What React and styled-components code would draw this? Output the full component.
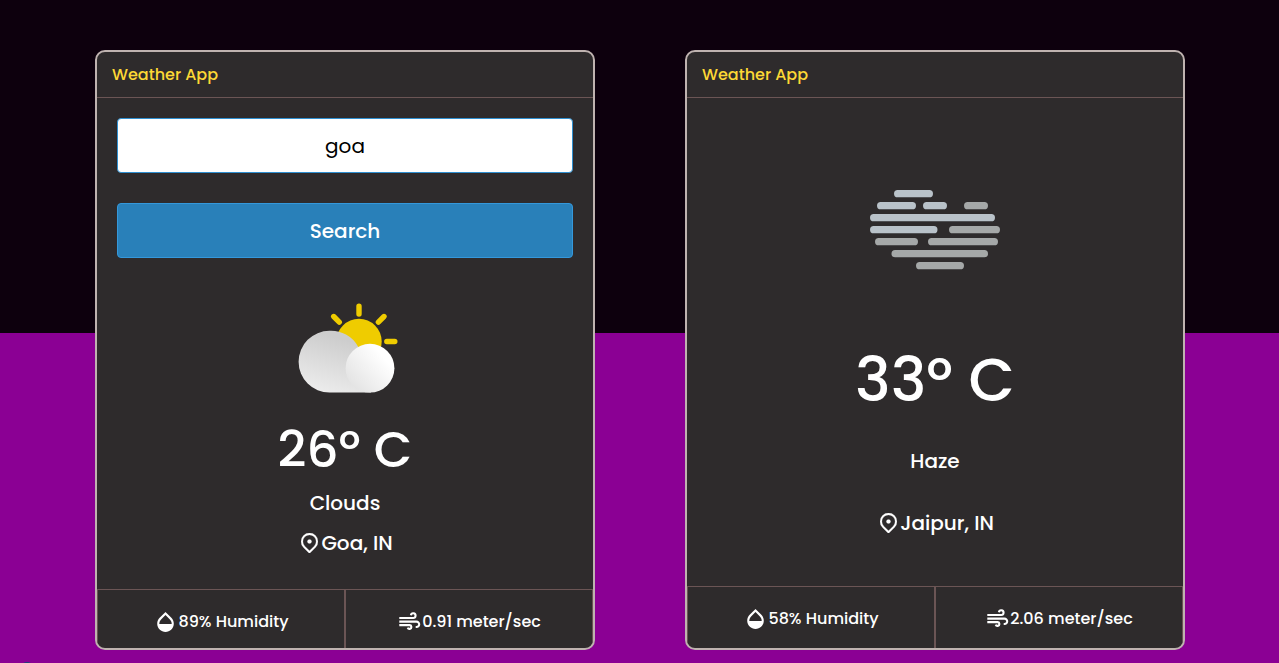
import React from "react";
import styled, { createGlobalStyle } from "styled-components";

const GlobalStyle = createGlobalStyle`
  * { box-sizing: border-box; }
  body {
    margin: 0;
    overflow: hidden;
    font-family: Poppins, Inter, "Liberation Sans", sans-serif;
    font-weight: 500;
    color: #fff;
  }
`;

const Page = styled.main`
  position: relative;
  height: 663px;
  padding: 50px 94px 0 95px;
  display: flex;
  justify-content: space-between;
  align-items: flex-start;
  overflow: hidden;
  background: linear-gradient(#0d000d 0 333px, #8b0094 333px);
`;

const Card = styled.section`
  width: 500px;
  height: 600px;
  display: flex;
  flex-direction: column;
  background: #2e2b2c;
  border: 2px solid #bfb3b0;
  border-radius: 10px;
  overflow: hidden;
`;

const Header = styled.header`
  flex: none;
  height: 46px;
  padding-left: 15px;
  border-bottom: 1px solid #6b5555;
  color: #fdd835;
  font-size: 16px;
  line-height: 45px;
`;

const Form = styled.form`
  display: grid;
  gap: 30px;
  padding: 20px 20px 0;
`;

const SearchInput = styled.input`
  width: 100%;
  height: 55px;
  border: 1px solid #2f8fd0;
  border-radius: 4px;
  outline: none;
  background: #fff;
  color: #000;
  font: 400 20px Poppins, Inter, sans-serif;
  text-align: center;
`;

const SearchButton = styled.button`
  height: 55px;
  border: 1px solid #3498db;
  border-radius: 4px;
  background: #2980b9;
  color: #fff;
  font: 500 20px Poppins, Inter, sans-serif;
`;

const Report = styled.div`
  flex: 1;
  display: flex;
  flex-direction: column;
  align-items: center;
  padding-top: ${(p) => p.$top}px;
`;

const Line = styled.div`
  display: flex;
  align-items: center;
  justify-content: center;
  margin-top: ${(p) => p.$top || 0}px;
  height: ${(p) => p.$height || 30}px;
  font-size: ${(p) => p.$size || 20}px;
  white-space: pre;
`;

const Place = styled(Line)`
  gap: 3px;
  padding-left: 4px;
`;

const Footer = styled.footer`
  flex: none;
  display: grid;
  grid-template-columns: 1fr 1fr;
  height: ${(p) => p.$height}px;
`;

const Metric = styled.div`
  display: flex;
  align-items: center;
  justify-content: center;
  gap: ${(p) => p.$gap}px;
  height: 59px;
  padding-top: 3px;
  padding-left: ${(p) => p.$indent}px;
  font-size: 16px;
  white-space: pre;
`;

const MetricCell = styled.div`
  border: 1px solid #6b5555;
  border-bottom: 0;
`;

const Badge = styled.div`
  position: absolute;
  left: 20px;
  top: 662px;
  width: 14px;
  height: 14px;
  border-radius: 7px;
  background: #17447a;
`;

const DropIcon = styled.svg`
  margin-top: 2px;
`;

const Pin = () => (
  <svg width="17" height="20.500" viewBox="3 2 18 21.730" fill="#fff" stroke="#fff" strokeWidth="0.250">
    <path fillRule="evenodd" d="M12 20.900l4.950-4.950a7 7 0 1 0-9.900 0L12 20.900zM12 23.730l-6.364-6.366a9 9 0 1 1 12.728 0L12 23.730z" />
    <circle cx="12" cy="11" r="2.200" />
  </svg>
);

const Drop = () => (
  <DropIcon width="17" height="20" viewBox="4 2.35 16 19.31" fill="#fff">
    <path d="M17.660 8L12 2.350 6.340 8C4.780 9.560 4 11.640 4 13.640s.78 4.110 2.340 5.670 3.610 2.350 5.660 2.350 4.100-.79 5.660-2.350S20 15.640 20 13.640 19.220 9.560 17.660 8zM6 14c.01-2 .62-3.270 1.760-4.400L12 5.270l4.240 4.380C17.380 10.770 17.990 12 18 14H6z" />
  </DropIcon>
);

const Wind = () => (
  <svg width="22" height="18" viewBox="0 0 22 18" fill="none" stroke="#fff" strokeWidth="2.100">
    <path d="M.3 6H14.200A2.350 2.350 0 1 0 11.900 3.200" />
    <path d="M.3 9.600H17.500A2.700 2.700 0 1 1 17.500 15H16.700" />
    <path d="M.3 13.100H10.700A1.900 1.900 0 1 1 8.700 15.600" />
  </svg>
);

const CloudSun = () => (
  <svg width="106" height="92" viewBox="292 302 106 92">
    <defs>
      <linearGradient id="back" x1="0.65" y1="0.15" x2="0.35" y2="1">
        <stop offset="0" stopColor="#cdcdcd" />
        <stop offset="1" stopColor="#ececec" />
      </linearGradient>
      <linearGradient id="front" x1="0.85" y1="0.2" x2="0.1" y2="0.85">
        <stop offset="0.1" stopColor="#fff" />
        <stop offset="1" stopColor="#e3e3e3" />
      </linearGradient>
    </defs>
    <circle cx="359" cy="341.5" r="22.7" fill="#efcc00" />
    <path
      d="M359 306.200V314M333.700 316.500L339.300 322.100M384 316.500L378.400 322.100M386.800 341.500H394.800"
      fill="none" stroke="#efcc00" strokeWidth="5.400" strokeLinecap="round"
    />
    <path d="M329.500 330.800a30.900 30.900 0 1 0 0 61.800H371V369L358 346.500A30.900 30.900 0 0 0 329.500 330.800Z" fill="url(#back)" />
    <circle cx="370" cy="368.200" r="24.400" fill="url(#front)" />
  </svg>
);

const hazeBars = [
  [894, 190, 39, 1], [877, 202, 39, 1], [923, 202, 24, 1], [964, 202, 24, 0],
  [870, 214, 125, 1], [870, 226, 67.5, 1], [949, 226, 51, 0],
  [875, 238, 43, 0], [928, 238, 70, 0], [891.5, 250, 96.500, 0], [916, 262, 48, 0],
];

const Haze = () => (
  <svg width="130" height="80" viewBox="870 190 130 80">
    {hazeBars.map(([x, y, w, light]) => (
      <rect key={`${x}-${y}`} x={x} y={y} width={w} height="7.300" rx="3.650" fill={light ? "#b9c2c9" : "#a5a8a8"} />
    ))}
  </svg>
);

const Metrics = ({ height, humidity, wind }) => (
  <Footer $height={height}>
    <MetricCell>
      <Metric $gap={4} $indent={4}>
        <Drop />
        <span>{humidity}</span>
      </Metric>
    </MetricCell>
    <MetricCell>
      <Metric $gap={1} $indent={2}>
        <Wind />
        <span>{wind}</span>
      </Metric>
    </MetricCell>
  </Footer>
);

export default function App() {
  return (
    <>
      <GlobalStyle />
      <Page>
        <Card>
          <Header>Weather App</Header>
          <Form onSubmit={(e) => e.preventDefault()}>
            <SearchInput defaultValue="goa" />
            <SearchButton type="submit">Search</SearchButton>
          </Form>
          <Report $top={44}>
            <CloudSun />
            <Line $top={26} $height={60} $size={50}>26º C</Line>
            <Line $top={8}>Clouds</Line>
            <Place $top={10}><Pin />Goa, IN</Place>
          </Report>
          <Metrics height={59} humidity="89% Humidity" wind="0.91 meter/sec" />
        </Card>
        <Card>
          <Header>Weather App</Header>
          <Report $top={92}>
            <Haze />
            <Line $top={75} $height={70} $size={60}>33º C</Line>
            <Line $top={31}>Haze</Line>
            <Place $top={32}><Pin />Jaipur, IN</Place>
          </Report>
          <Metrics height={62} humidity="58% Humidity" wind="2.06 meter/sec" />
        </Card>
        <Badge />
      </Page>
    </>
  );
}
